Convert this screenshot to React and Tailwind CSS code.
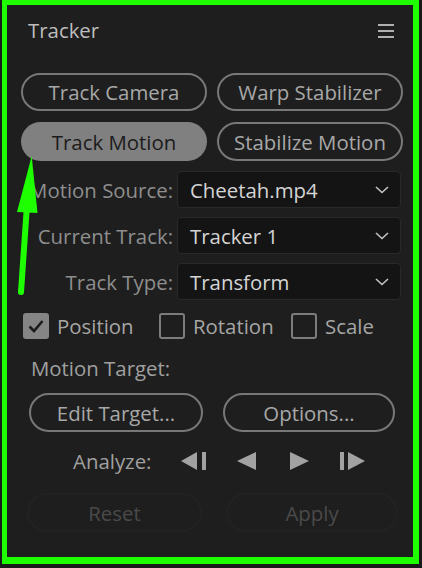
import React from "react";

function PillButton({ label, active, className = "" }) {
  return (
    <div
      className={
        "flex items-center justify-center rounded-full text-[20.4px] leading-[24px] " +
        (active
          ? "bg-[#808080] text-[#1b1b1b]"
          : "border-2 border-[#787878] text-[#a8a8a8]") +
        " " +
        className
      }
    >
      {label}
    </div>
  );
}

function Chevron() {
  return (
    <svg width="14" height="8" viewBox="0 0 14 8" className="shrink-0">
      <path d="M1 1 L7 6.5 L13 1" fill="none" stroke="#c4c4c4" strokeWidth="1.6" />
    </svg>
  );
}

function SelectRow({ label, value, className = "" }) {
  return (
    <div className={"flex items-center " + className}>
      <div className="w-[152px] shrink-0 whitespace-nowrap text-[20.4px] leading-[24px] text-[#8e8e8e] flex justify-end">
        {label}
      </div>
      <div className="ml-[4px] w-[224px] h-[37px] flex items-center justify-between pl-[12px] pr-[11px] bg-[#141414] border border-[#292929] rounded-[4px]">
        <span className="text-[20.4px] leading-[24px] text-[#d4d4d4]">{value}</span>
        <Chevron />
      </div>
    </div>
  );
}

function Check({ checked, label }) {
  return (
    <div className="flex items-center">
      {checked ? (
        <div className="w-[26px] h-[26px] rounded-[3px] bg-[#858585] flex items-center justify-center">
          <svg width="18" height="16" viewBox="0 0 18 16">
            <path d="M2.5 8.5 L7 13 L15.5 3" fill="none" stroke="#1c1c1c" strokeWidth="2.6" />
          </svg>
        </div>
      ) : (
        <div className="w-[26px] h-[26px] rounded-[3px] border-2 border-[#7c7c7c]" />
      )}
      <span className="ml-[8px] text-[20.4px] leading-[24px] text-[#a6a6a6]">{label}</span>
    </div>
  );
}

export default function App() {
  return (
    <div
      className="relative w-[422px] h-[568px] bg-[#1a1a1a] pl-[2px] overflow-hidden"
      style={{ fontFamily: '"Open Sans", "Noto Sans", sans-serif' }}
    >
      <div className="w-[417px] h-[564px] border-t-[5px] border-l-[5px] border-r-[6px] border-b-[7px] border-[#1eff00] bg-[#1e1e1e] flex flex-col pl-[14px] pr-[10px]">
        {/* header */}
        <div className="mt-[13px] flex items-center justify-between">
          <span className="ml-[7px] text-[20.4px] leading-[24px] text-[#bdbdbd]">Tracker</span>
          <div className="mr-[9px] flex flex-col gap-[4px] mt-[2px]">
            <div className="w-[16px] h-[2px] bg-[#b0b0b0]" />
            <div className="w-[16px] h-[2px] bg-[#b0b0b0]" />
            <div className="w-[16px] h-[2px] bg-[#b0b0b0]" />
          </div>
        </div>

        {/* tracker buttons */}
        <div className="mt-[31px] grid grid-cols-[186px_186px] gap-x-[10px] gap-y-[11px]">
          <PillButton label="Track Camera" className="h-[38px]" />
          <PillButton label="Warp Stabilizer" className="h-[38px]" />
          <PillButton label="Track Motion" active className="h-[39px]" />
          <PillButton label="Stabilize Motion" className="h-[39px]" />
        </div>

        {/* selects */}
        <SelectRow label="Motion Source:" value="Cheetah.mp4" className="mt-[10px]" />
        <SelectRow label="Current Track:" value="Tracker 1" className="mt-[9px]" />
        <SelectRow label="Track Type:" value="Transform" className="mt-[9px]" />

        {/* checkboxes */}
        <div className="mt-[13px] ml-[2px] grid grid-cols-[136px_132px_auto]">
          <Check checked label="Position" />
          <Check label="Rotation" />
          <Check label="Scale" />
        </div>

        <div className="mt-[17px] ml-[10px] text-[20.4px] leading-[24px] text-[#a0a0a0]">Motion Target:</div>

        <div className="mt-[13px] ml-[8px] flex gap-[20px]">
          <PillButton label="Edit Target..." className="w-[174px] h-[39px]" />
          <PillButton label="Options..." className="w-[172px] h-[39px]" />
        </div>

        {/* analyze */}
        <div className="mt-[17px] h-[24px] flex items-center">
          <span className="ml-[52px] w-[82px] shrink-0 text-[20.4px] leading-[24px] text-[#a0a0a0]">Analyze:</span>
          <svg width="25" height="18" viewBox="0 0 25 18" className="ml-[26px]">
            <polygon points="0,9 16,0 16,18" fill="#a2a2a2" />
            <rect x="21" y="0" width="4" height="18" fill="#a2a2a2" />
          </svg>
          <svg width="19" height="18" viewBox="0 0 19 18" className="ml-[31px]">
            <polygon points="0,9 19,0 19,18" fill="#a2a2a2" />
          </svg>
          <svg width="19" height="18" viewBox="0 0 19 18" className="ml-[34px]">
            <polygon points="0,0 19,9 0,18" fill="#a2a2a2" />
          </svg>
          <svg width="25" height="18" viewBox="0 0 25 18" className="ml-[31px]">
            <rect x="0" y="0" width="4" height="18" fill="#a2a2a2" />
            <polygon points="8,0 25,9 8,18" fill="#a2a2a2" />
          </svg>
        </div>

        <div className="mt-[20px] ml-[6px] flex gap-[24px]">
          <div className="w-[175px] h-[39px] rounded-full border-2 border-[#222222] flex items-center justify-center text-[20.4px] leading-[24px] text-[#4a4a4a]">
            Reset
          </div>
          <div className="w-[172px] h-[39px] rounded-full border-2 border-[#222222] flex items-center justify-center text-[20.4px] leading-[24px] text-[#4a4a4a]">
            Apply
          </div>
        </div>
      </div>

      {/* annotation arrow */}
      <svg
        width="422"
        height="568"
        viewBox="0 0 422 568"
        className="absolute left-0 top-0 pointer-events-none"
      >
        <polygon points="31.7,156 17,212 37.5,213" fill="#1eff00" />
        <line x1="26.8" y1="208" x2="21" y2="292" stroke="#1eff00" strokeWidth="6" strokeLinecap="round" />
      </svg>
    </div>
  );
}
